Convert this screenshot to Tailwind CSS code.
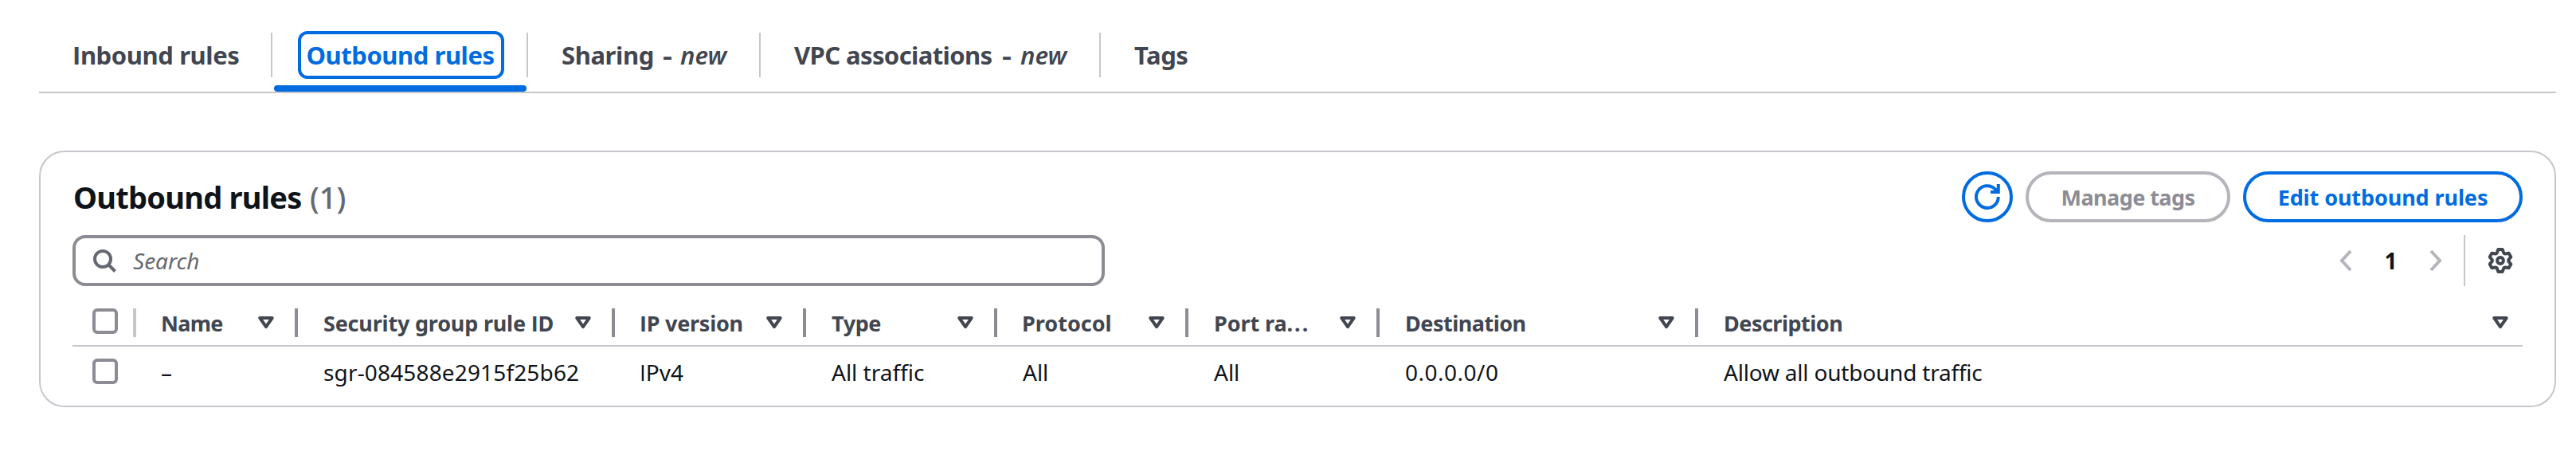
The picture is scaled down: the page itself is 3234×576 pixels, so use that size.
<!DOCTYPE html>
<html lang="en">
<head>
<meta charset="utf-8">
<title>Outbound rules</title>
<script src="https://cdn.jsdelivr.net/npm/@tailwindcss/browser@4"></script>
</head>
<body class="h-[576px] overflow-hidden bg-white pt-[41px] pl-[49px] pr-[25px] font-['Noto_Sans','Open_Sans',sans-serif] text-[#0f141a]">
<svg class="hidden">
  <symbol id="tri" viewBox="0 0 20 16"><path d="M2.3 2h15.4L10 13.2z" fill="none" stroke="currentColor" stroke-width="4" stroke-linejoin="round"/></symbol>
</svg>

<nav class="flex h-[76px] items-start border-b-2 border-[#c6c6cd] text-[31px] leading-[56px] font-bold whitespace-nowrap text-[#424650]">
  <a class="h-[56px] w-[293px] border-r-2 border-[#c6c6cd] pl-[42px] tracking-[-0.4px]"><span class="font-['Open_Sans']">I</span>nbound rules</a>
  <a class="relative h-[56px] w-[321px] border-r-2 border-[#c6c6cd] pl-[32px] text-[#006ce0]">
    <span class="-mt-[2px] flex h-[60px] w-[259px] items-center rounded-[12px] border-4 border-[#006ce0] pl-[6.5px] leading-[52px] tracking-[-0.45px]">Outbound rules</span>
    <span class="absolute top-[66px] left-[2px] h-[8px] w-[317px] rounded-[4px] bg-[#006ce0]"></span>
  </a>
  <a class="flex h-[56px] w-[292px] border-r-2 border-[#c6c6cd] pl-[42px]"><span class="w-[127px] tracking-[-0.4px]">Sharing</span><span class="w-[22px] origin-left scale-x-[1.2]">-</span><i class="font-semibold tracking-[0.1px]">new</i></a>
  <a class="flex h-[56px] w-[427px] border-r-2 border-[#c6c6cd] pl-[42px]"><span class="w-[261px] tracking-[-0.6px]">VPC associations</span><span class="w-[23px] origin-left scale-x-[1.2]">-</span><i class="font-semibold tracking-[0.1px]">new</i></a>
  <a class="h-[56px] pl-[42px] tracking-[-0.4px]">Tags</a>
</nav>

<section class="mt-[72px] h-[322px] rounded-[32px] border-2 border-[#c6c6cd] px-[40px] pt-[24px]">
  <header class="flex h-[64px] items-center justify-between">
    <h2 class="flex gap-[10px] pl-[1px] text-[38px] leading-[66px]"><span class="w-[287px] font-bold tracking-[-0.75px]">Outbound rules</span><span class="font-medium text-[#656871]">(1)</span></h2>
    <div class="flex gap-[16px] text-[27px] leading-[56px] font-bold">
      <button class="grid size-[64px] place-items-center rounded-full border-4 border-[#006ce0] text-[#006ce0]">
        <svg class="size-[32px]" viewBox="0 0 32 32" fill="none" stroke="currentColor" stroke-width="4"><path d="M29.8 16A13.9 13.9 0 1 1 25.9 6.4L29 9.8M29.8 0v10H20"/></svg>
      </button>
      <button class="h-[64px] w-[257px] rounded-full border-4 border-[#b4b4bb] pt-px tracking-[-0.55px] text-[#8c8c94]">Manage tags</button>
      <button class="h-[64px] w-[351px] rounded-full border-4 border-[#006ce0] pt-px tracking-[-0.1px] text-[#006ce0]">Edit outbound rules</button>
    </div>
  </header>

  <div class="mt-[16px] flex h-[64px] items-center justify-between">
    <div class="flex h-[64px] w-[1296px] items-center rounded-[16px] border-4 border-[#8c8c94] pl-[22px] text-[28px] leading-[56px] text-[#656871]">
      <svg class="size-[30px]" viewBox="0 0 30 30" fill="none" stroke="currentColor" stroke-width="4"><circle cx="12" cy="13" r="10"/><path d="M19 20l8.5 8.5"/></svg>
      <i class="pl-[20px]">Search</i>
    </div>
    <div class="flex h-[64px] items-center pr-[12px]">
      <svg class="h-[28px] w-[16px] text-[#b4b4bb]" viewBox="0 0 16 28" fill="none" stroke="currentColor" stroke-width="4"><path d="M14 2L3 14l11 12"/></svg>
      <b class="w-[97px] text-center text-[28px]">1</b>
      <svg class="h-[28px] w-[16px] text-[#b4b4bb]" viewBox="0 0 16 28" fill="none" stroke="currentColor" stroke-width="4"><path d="M2 2l11 12L2 26"/></svg>
      <span class="ml-[27px] h-[64px] w-[2px] bg-[#c6c6cd]"></span>
      <svg class="ml-[28px] size-[32px] text-[#424650]" viewBox="-16 -16 32 32" fill="none" stroke="currentColor" stroke-width="4" stroke-linejoin="round"><circle r="3.9"/><path d="M-4.35-9.33L-2.6-14H2.6L4.35-9.33L5.91-8.44L10.6-9.2L13.3-4.5L10.26-.9V.9L13.3 4.5L10.6 9.2L5.91 8.44L4.35 9.33L2.6 14H-2.6L-4.35 9.33L-5.91 8.44L-10.6 9.2L-13.3 4.5L-10.26 .9V-.9L-13.3-4.5L-10.6-9.2L-5.91-8.44Z"/></svg>
    </div>
  </div>

  <div class="mt-[18px] grid h-[58px] grid-cols-[80px_203px_398px_240px_240px_240px_240px_400px_1035px] items-start border-b-2 border-[#c6c6cd] pt-[10px] text-[27px] leading-[36px] font-bold whitespace-nowrap text-[#424650]">
    <div class="h-[36px] border-r-4 border-[#c6c6cd] pl-[25px]"><div class="size-[32px] rounded-[6px] border-4 border-[#8c8c94]"></div></div>
    <div class="flex h-[36px] items-center justify-between border-r-4 border-[#8c8c94] pr-[26px] pl-[31px]"><span class="pt-[2px] tracking-[-0.7px]">Name</span><svg class="h-[16px] w-[20px]"><use href="#tri"/></svg></div>
    <div class="flex h-[36px] items-center justify-between border-r-4 border-[#8c8c94] pr-[26px] pl-[32px]"><span class="pt-[2px] tracking-[-0.2px]">Security group rule <span class="font-['Open_Sans']">I</span>D</span><svg class="h-[16px] w-[20px]"><use href="#tri"/></svg></div>
    <div class="flex h-[36px] items-center justify-between border-r-4 border-[#8c8c94] pr-[26px] pl-[31px]"><span class="pt-[2px] tracking-[-0.25px]"><span class="font-['Open_Sans']">I</span>P version</span><svg class="h-[16px] w-[20px]"><use href="#tri"/></svg></div>
    <div class="flex h-[36px] items-center justify-between border-r-4 border-[#8c8c94] pr-[26px] pl-[32px]"><span class="pt-[2px] tracking-[-0.4px]">Type</span><svg class="h-[16px] w-[20px]"><use href="#tri"/></svg></div>
    <div class="flex h-[36px] items-center justify-between border-r-4 border-[#8c8c94] pr-[26px] pl-[31px]"><span class="pt-[2px]">Protocol</span><svg class="h-[16px] w-[20px]"><use href="#tri"/></svg></div>
    <div class="flex h-[36px] items-center justify-between border-r-4 border-[#8c8c94] pr-[26px] pl-[32px]"><span class="pt-[2px] tracking-[-0.1px]">Port ra<span class="tracking-[2px]">...</span></span><svg class="h-[16px] w-[20px]"><use href="#tri"/></svg></div>
    <div class="flex h-[36px] items-center justify-between border-r-4 border-[#8c8c94] pr-[26px] pl-[32px]"><span class="pt-[2px] tracking-[-0.5px]">Destination</span><svg class="h-[16px] w-[20px]"><use href="#tri"/></svg></div>
    <div class="flex h-[36px] items-center justify-between pr-[18px] pl-[32px]"><span class="pt-[2px] tracking-[-0.5px]">Description</span><svg class="h-[16px] w-[20px]"><use href="#tri"/></svg></div>
  </div>

  <div class="grid h-[64px] grid-cols-[80px_203px_398px_240px_240px_240px_240px_400px_1035px] text-[28px] leading-[65px] whitespace-nowrap">
    <div class="pt-[15px] pl-[25px]"><div class="size-[32px] rounded-[6px] border-4 border-[#8c8c94]"></div></div>
    <div class="pl-[31px]">–</div>
    <div class="pl-[32px] tracking-[0.15px]">sgr-084588e2915f25b62</div>
    <div class="pl-[31px]"><span class="font-['Open_Sans']">I</span>Pv4</div>
    <div class="pl-[32px]">All traffic</div>
    <div class="pl-[32px]">All</div>
    <div class="pl-[32px]">All</div>
    <div class="pl-[32px] tracking-[0.5px]">0.0.0.0/0</div>
    <div class="pl-[32px] tracking-[-0.2px]">Allow all outbound traffic</div>
  </div>
</section>
</body>
</html>
